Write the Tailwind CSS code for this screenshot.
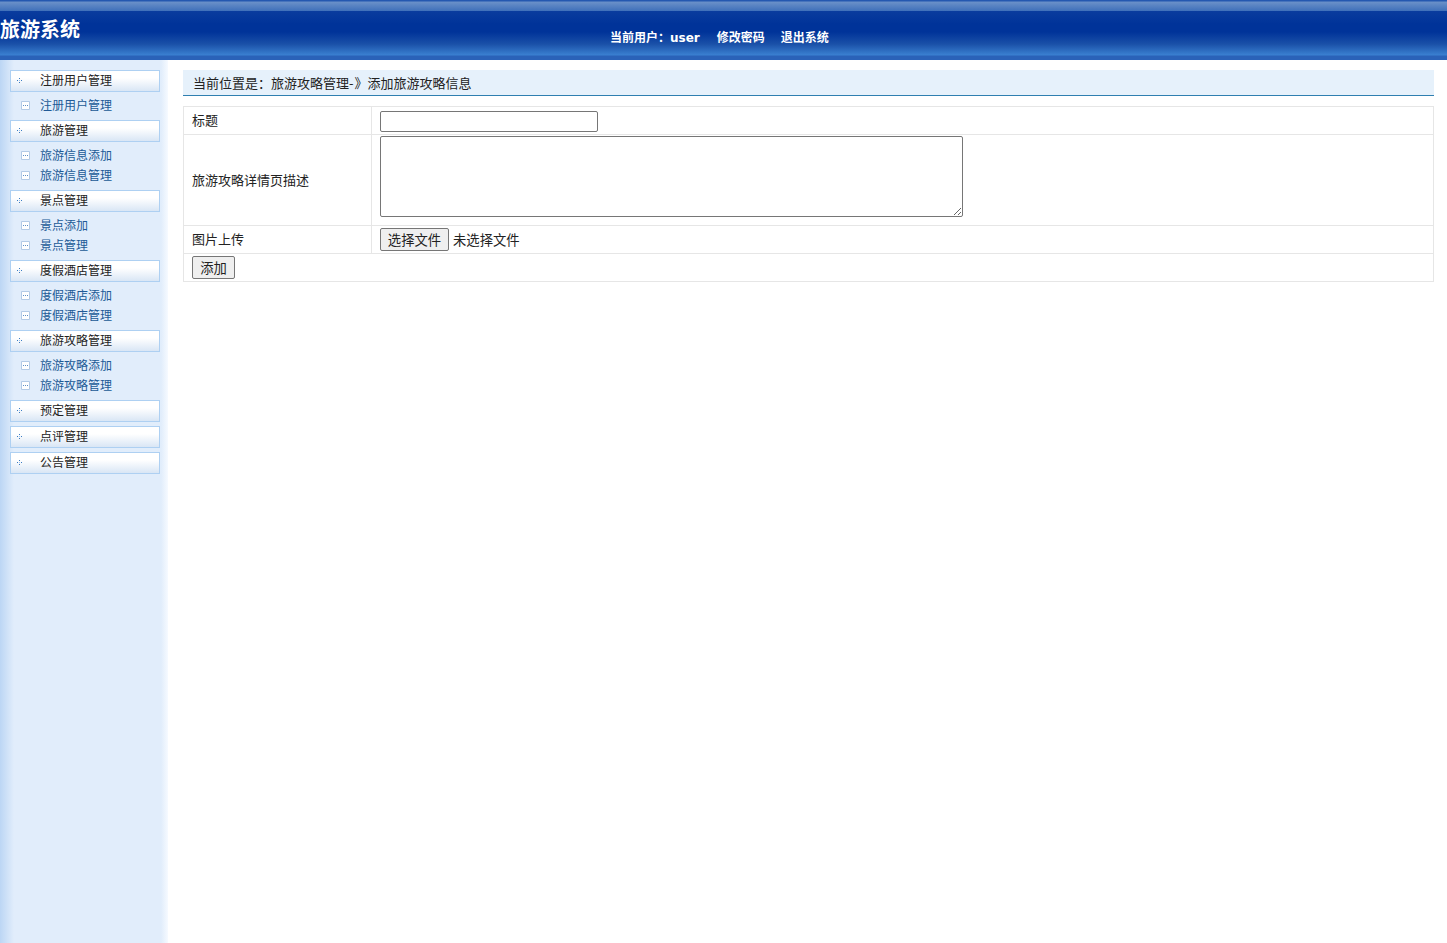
<!DOCTYPE html>
<html lang="zh-CN">
  <head>
    <meta charset="UTF-8" />
    <title>旅游系统</title>
    <script src="https://cdn.jsdelivr.net/npm/@tailwindcss/browser@4"></script>
  </head>
  <body class="h-[943px] overflow-hidden bg-white font-['Noto_Sans_CJK_SC','Liberation_Sans',sans-serif] text-[13px] text-[#222]">
    <!-- plus and box icons, reused below -->
    <svg class="hidden">
      <symbol id="plus" viewBox="0 0 5 5"><path fill="#3a7cc4" d="M2 0h1v1H2zM0 2h1v1H0zM4 2h1v1H4zM2 4h1v1H2z" /><path fill="#a9c8ea" d="M2 2h1v1H2z" /></symbol>
      <symbol id="box" viewBox="0 0 9 9"><path fill="#fff" stroke="#b4cbe6" d="M.5.5h8v8h-8z" /><path fill="#5f8fc4" d="M2 4h1v1H2zM4 4h1v1H4zM6 4h1v1H6z" /></symbol>
    </svg>

    <!-- header -->
    <header class="flex h-[60px] bg-[linear-gradient(#2458b0_0px,#2458b0_1px,#6a90c8_2px,#3f70ba_11px,#0a3c9e_11px,#003399_24px,#003399_32px,#1a50a8_44px,#3a80d0_55px,#2a62b8_56px,#2a62b8_60px)] text-white">
      <h1 class="w-[610px] pt-[15px] text-[20px] leading-[28px] font-bold">旅游系统</h1>
      <div class="flex gap-4 pt-[28px] text-[12px] leading-[17px] font-bold">
        <span class="pr-px">当前用户：<span class="font-['DejaVu_Sans',sans-serif]">user</span></span>
        <a href="#">修改密码</a>
        <a href="#">退出系统</a>
      </div>
    </header>

    <div class="flex h-[883px]">
      <!-- sidebar -->
      <nav class="w-[168px] shrink-0 bg-[linear-gradient(90deg,#bcd6f4_0px,#e1edfb_14px,#e1edfb_161px,#f6faff_168px)] pt-[10px] pl-[10px] text-[12px] text-[#222]">
        <div class="flex h-[22px] w-[150px] items-center border border-[#aed0f2] bg-[linear-gradient(#fff_35%,#d9e6f5)] leading-[20px]">
          <svg class="mb-[2px] ml-[6px] h-[5px] w-[5px]"><use href="#plus" /></svg>
          <span class="ml-[18px] pb-[2px]">注册用户管理</span>
        </div>
        <ul class="mt-[3px] mb-[5px] text-[#205a96]">
          <li class="flex h-5 items-center"><svg class="mr-[10px] ml-[11px] h-[9px] w-[9px]"><use href="#box" /></svg>注册用户管理</li>
        </ul>

        <div class="flex h-[22px] w-[150px] items-center border border-[#aed0f2] bg-[linear-gradient(#fff_35%,#d9e6f5)] leading-[20px]">
          <svg class="mb-[2px] ml-[6px] h-[5px] w-[5px]"><use href="#plus" /></svg>
          <span class="ml-[18px] pb-[2px]">旅游管理</span>
        </div>
        <ul class="mt-[3px] mb-[5px] text-[#205a96]">
          <li class="flex h-5 items-center"><svg class="mr-[10px] ml-[11px] h-[9px] w-[9px]"><use href="#box" /></svg>旅游信息添加</li>
          <li class="flex h-5 items-center"><svg class="mr-[10px] ml-[11px] h-[9px] w-[9px]"><use href="#box" /></svg>旅游信息管理</li>
        </ul>

        <div class="flex h-[22px] w-[150px] items-center border border-[#aed0f2] bg-[linear-gradient(#fff_35%,#d9e6f5)] leading-[20px]">
          <svg class="mb-[2px] ml-[6px] h-[5px] w-[5px]"><use href="#plus" /></svg>
          <span class="ml-[18px] pb-[2px]">景点管理</span>
        </div>
        <ul class="mt-[3px] mb-[5px] text-[#205a96]">
          <li class="flex h-5 items-center"><svg class="mr-[10px] ml-[11px] h-[9px] w-[9px]"><use href="#box" /></svg>景点添加</li>
          <li class="flex h-5 items-center"><svg class="mr-[10px] ml-[11px] h-[9px] w-[9px]"><use href="#box" /></svg>景点管理</li>
        </ul>

        <div class="flex h-[22px] w-[150px] items-center border border-[#aed0f2] bg-[linear-gradient(#fff_35%,#d9e6f5)] leading-[20px]">
          <svg class="mb-[2px] ml-[6px] h-[5px] w-[5px]"><use href="#plus" /></svg>
          <span class="ml-[18px] pb-[2px]">度假酒店管理</span>
        </div>
        <ul class="mt-[3px] mb-[5px] text-[#205a96]">
          <li class="flex h-5 items-center"><svg class="mr-[10px] ml-[11px] h-[9px] w-[9px]"><use href="#box" /></svg>度假酒店添加</li>
          <li class="flex h-5 items-center"><svg class="mr-[10px] ml-[11px] h-[9px] w-[9px]"><use href="#box" /></svg>度假酒店管理</li>
        </ul>

        <div class="flex h-[22px] w-[150px] items-center border border-[#aed0f2] bg-[linear-gradient(#fff_35%,#d9e6f5)] leading-[20px]">
          <svg class="mb-[2px] ml-[6px] h-[5px] w-[5px]"><use href="#plus" /></svg>
          <span class="ml-[18px] pb-[2px]">旅游攻略管理</span>
        </div>
        <ul class="mt-[3px] mb-[5px] text-[#205a96]">
          <li class="flex h-5 items-center"><svg class="mr-[10px] ml-[11px] h-[9px] w-[9px]"><use href="#box" /></svg>旅游攻略添加</li>
          <li class="flex h-5 items-center"><svg class="mr-[10px] ml-[11px] h-[9px] w-[9px]"><use href="#box" /></svg>旅游攻略管理</li>
        </ul>

        <div class="mb-1 flex h-[22px] w-[150px] items-center border border-[#aed0f2] bg-[linear-gradient(#fff_35%,#d9e6f5)] leading-[20px]">
          <svg class="mb-[2px] ml-[6px] h-[5px] w-[5px]"><use href="#plus" /></svg>
          <span class="ml-[18px] pb-[2px]">预定管理</span>
        </div>
        <div class="mb-1 flex h-[22px] w-[150px] items-center border border-[#aed0f2] bg-[linear-gradient(#fff_35%,#d9e6f5)] leading-[20px]">
          <svg class="mb-[2px] ml-[6px] h-[5px] w-[5px]"><use href="#plus" /></svg>
          <span class="ml-[18px] pb-[2px]">点评管理</span>
        </div>
        <div class="flex h-[22px] w-[150px] items-center border border-[#aed0f2] bg-[linear-gradient(#fff_35%,#d9e6f5)] leading-[20px]">
          <svg class="mb-[2px] ml-[6px] h-[5px] w-[5px]"><use href="#plus" /></svg>
          <span class="ml-[18px] pb-[2px]">公告管理</span>
        </div>
      </nav>

      <!-- main -->
      <main class="ml-[15px] w-[1251px] pt-[10px]">
        <div class="h-[26px] border-b border-[#2f7fb0] bg-[#e6f1fb] pl-[10px] leading-[25px]">当前位置是：旅游攻略管理<span class="pr-px">-</span>》添加旅游攻略信息</div>
        <table class="mt-[10px] w-full table-fixed border-collapse border border-[#e6e6e6]">
          <colgroup>
            <col class="w-[188px]" />
            <col />
          </colgroup>
          <tbody>
            <tr class="h-[28px]">
              <td class="border border-[#e6e6e6] pb-[2px] pl-2">标题</td>
              <td class="border border-[#e6e6e6] pl-2"><input type="text" class="mt-[2px] block h-[21px] w-[218px] rounded-[2px] border border-[#767676] bg-white" /></td>
            </tr>
            <tr class="h-[91px]">
              <td class="border border-[#e6e6e6] pl-2">旅游攻略详情页描述</td>
              <td class="border border-[#e6e6e6] pl-2 align-top"><textarea class="mt-[1px] block h-[81px] w-[583px] rounded-[2px] border border-[#767676] bg-white"></textarea></td>
            </tr>
            <tr class="h-[28px]">
              <td class="border border-[#e6e6e6] pb-[2px] pl-2">图片上传</td>
              <td class="border border-[#e6e6e6] pl-2">
                <div class="flex items-center">
                  <button type="button" class="h-[23px] w-[69px] rounded-[2px] border border-[#767676] bg-[#efefef] text-[13.33px] leading-[18px]">选择文件</button>
                  <span class="ml-1 text-[13.33px] leading-[19px]">未选择文件</span>
                </div>
              </td>
            </tr>
            <tr class="h-[28px]">
              <td colspan="2" class="border border-[#e6e6e6] pl-2">
                <button type="button" class="block h-[23px] w-[43px] rounded-[2px] border border-[#767676] bg-[#efefef] text-[13.33px] leading-[18px]">添加</button>
              </td>
            </tr>
          </tbody>
        </table>
      </main>
    </div>
  </body>
</html>
